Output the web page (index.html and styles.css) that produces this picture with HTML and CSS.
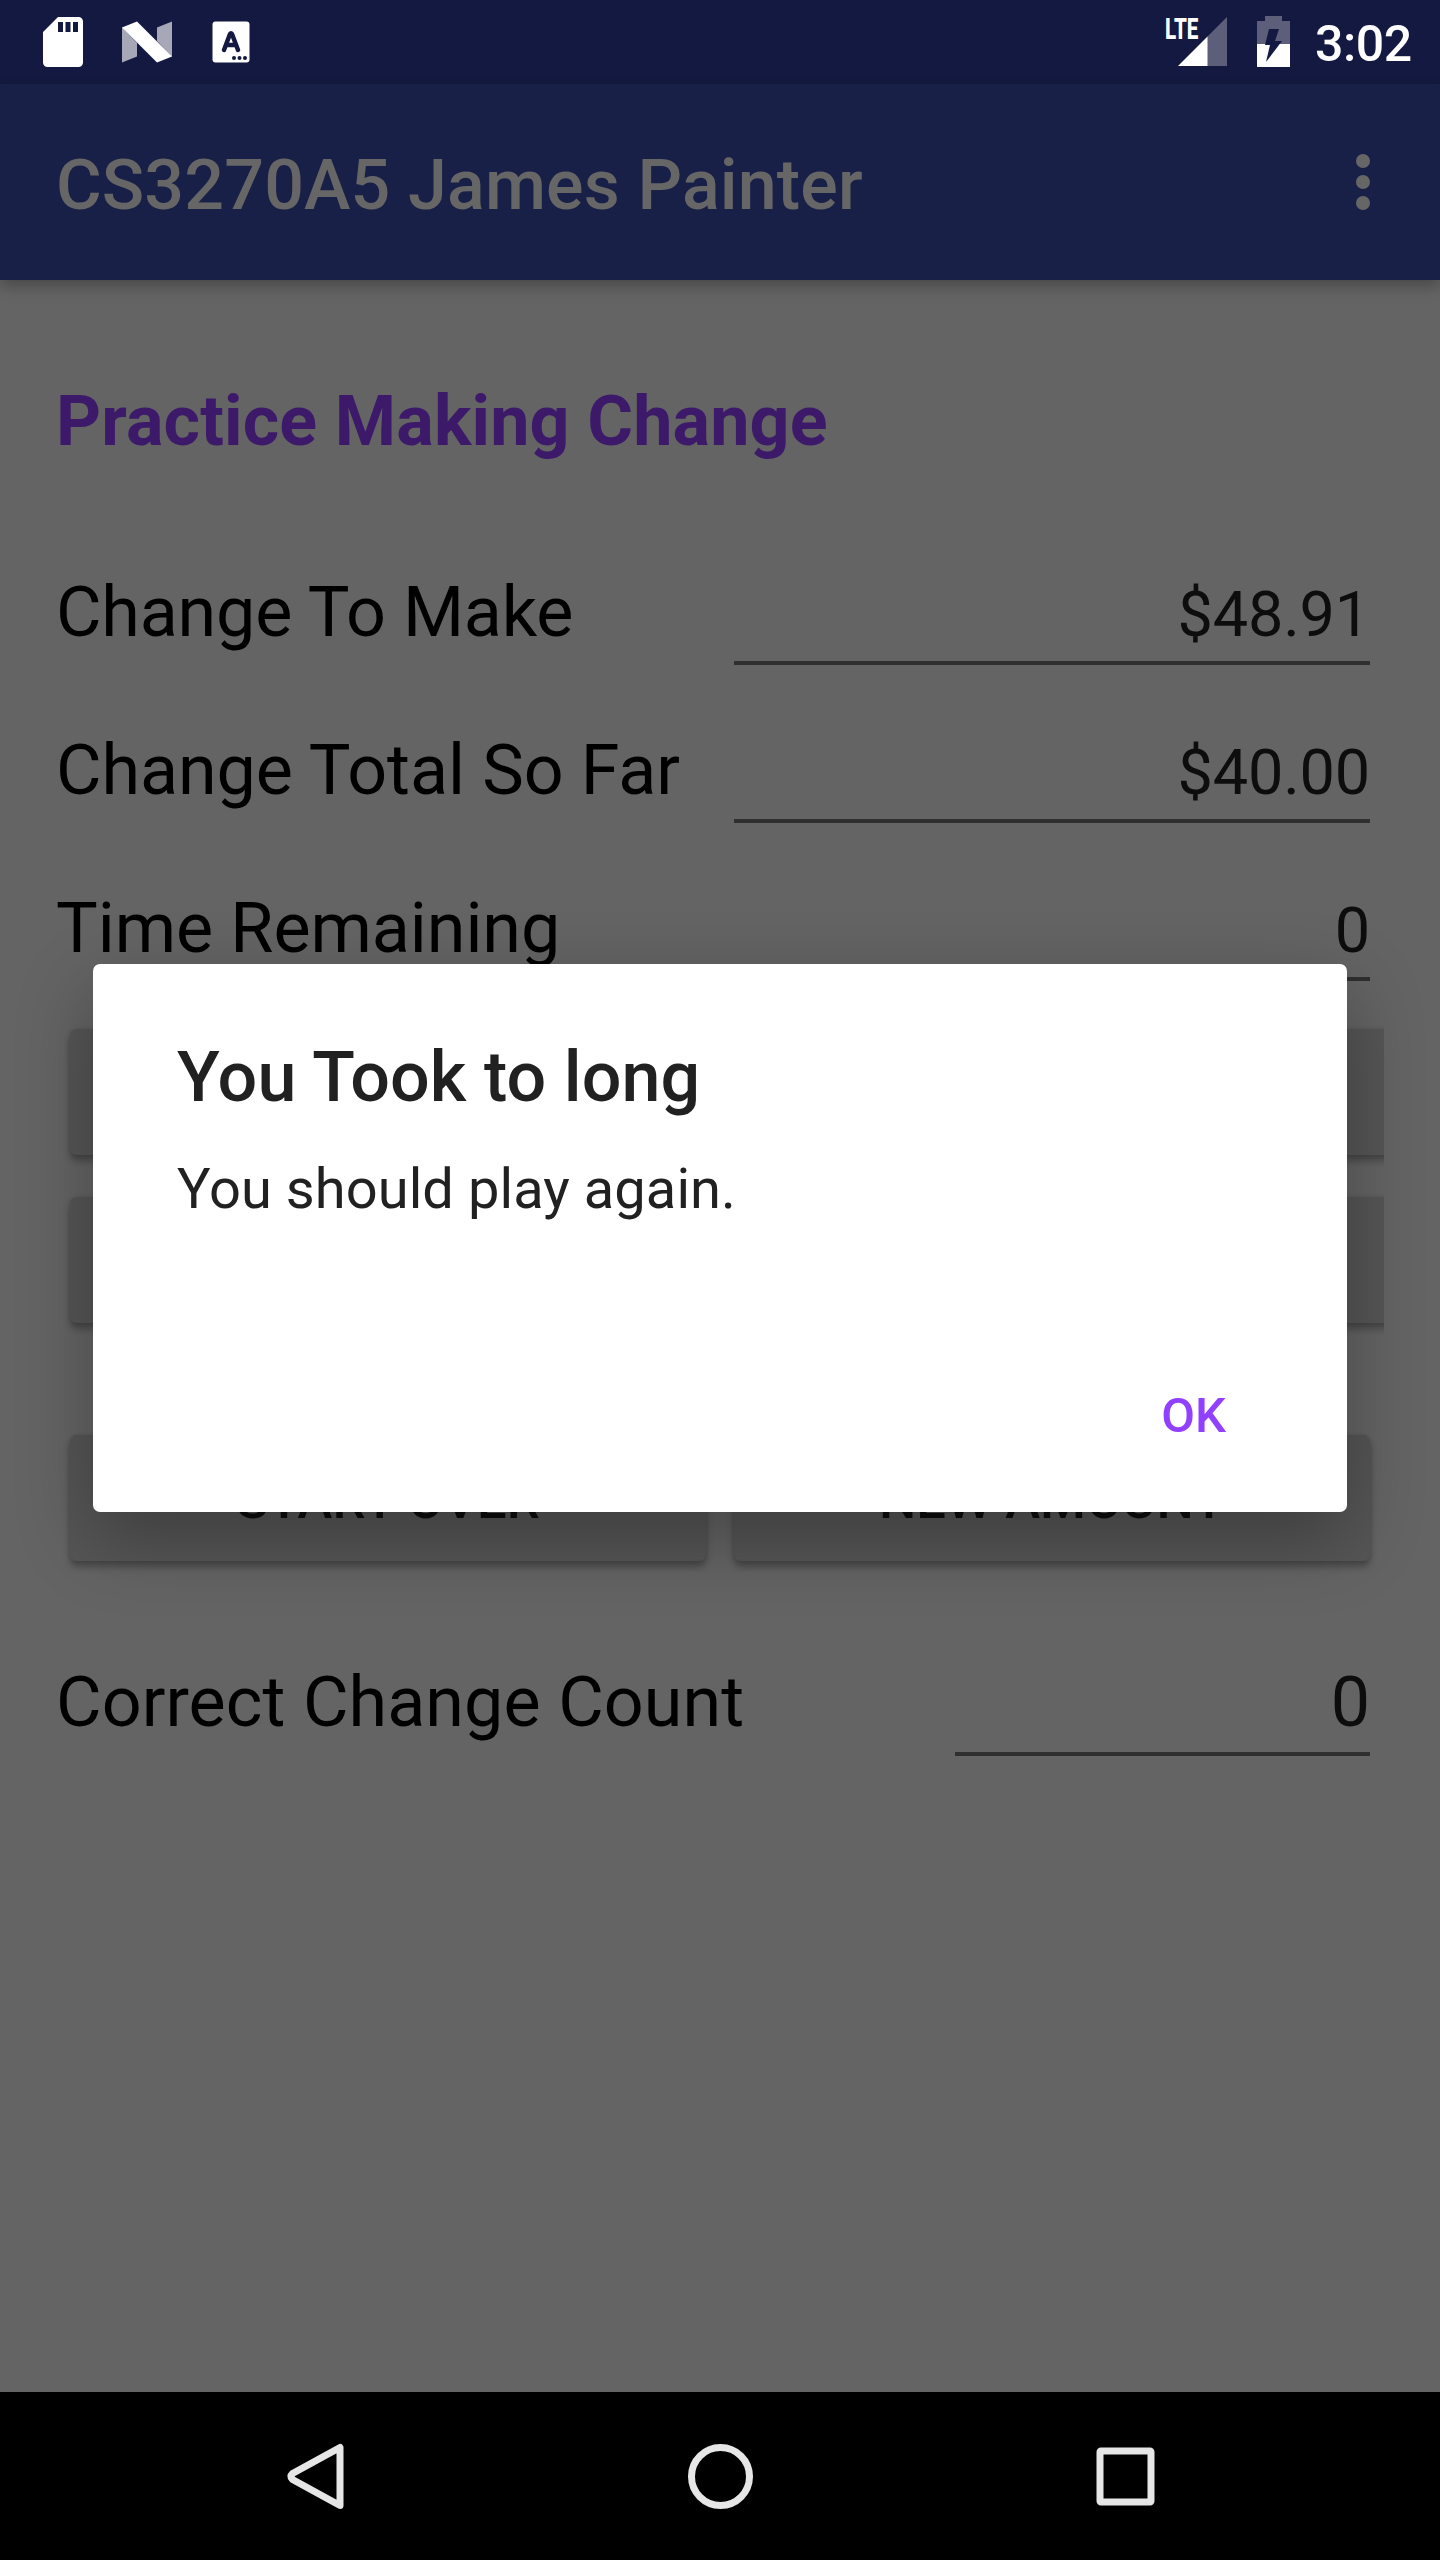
FILE: index.html
```html
<!DOCTYPE html>
<html lang="en">
<head>
<meta charset="utf-8">
<title>CS3270A5 James Painter</title>
<link rel="stylesheet" href="styles.css">
</head>
<body>
<div class="screen">
  <header class="status-bar">
    <svg class="status-icons" width="260" height="84" viewBox="0 0 260 84">
      <path fill="#fff" fill-rule="evenodd" d="M58 17H78.500A4.500 4.500 0 0 1 83 21.500V62.500A4.500 4.500 0 0 1 78.500 67H47.500A4.500 4.500 0 0 1 43 62.500V32ZM58 22V32H63V22ZM65.500 22V32H70.500V22ZM73 22V32H78V22Z"/>
      <path fill="#a6a7b7" d="M122 27L137 43V56.500L122 62.500ZM157 27.500L172 21.500V57L157 41Z"/>
      <path fill="#fff" d="M122 27.500L137 21.500L172 56.500L157 62.500Z"/>
      <rect x="212.500" y="21.500" width="37" height="41" rx="3" fill="#fff"/>
      <path d="M224 50L230 34Q231 32.500 232 34L238 50M226.500 45H235.500" fill="none" stroke="#131940" stroke-width="4.500" stroke-linecap="round" stroke-linejoin="round"/>
      <g fill="#131940"><circle cx="234" cy="58" r="2"/><circle cx="239.500" cy="58" r="2"/><circle cx="245" cy="58" r="2"/></g>
    </svg>
    <div class="status-right">
      <span class="lte">LTE</span>
      <svg width="130" height="84" viewBox="1170 0 130 84">
        <path fill="#5d5f7a" d="M1227 17V66H1207V37Z"/>
        <path fill="#fff" d="M1207.500 36.500V66H1178Z"/>
        <path fill="#5d5f7a" d="M1265 16H1282V21H1290V44H1257V21H1265Z"/>
        <path fill="#fff" d="M1257 44H1290V67H1257Z"/>
        <path fill="#131940" d="M1269 29H1279L1275 41H1282L1266 62L1270 45H1265Z"/>
      </svg>
      <span class="clock">3:02</span>
    </div>
  </header>
  <div class="app-bar">
    <h1 class="app-title">CS3270A5 James Painter</h1>
    <svg width="14" height="56" viewBox="0 0 14 56" fill="#666"><circle cx="7" cy="7" r="7"/><circle cx="7" cy="28" r="7"/><circle cx="7" cy="49" r="7"/></svg>
  </div>
  <main class="content">
    <h2 class="heading">Practice Making Change</h2>
    <div class="row"><span class="label tight">Change To Make</span><span class="field">$48.91</span></div>
    <div class="row"><span class="label">Change Total So Far</span><span class="field">$40.00</span></div>
    <div class="row"><span class="label">Time Remaining</span><span class="field">0</span></div>
    <div class="money-rows">
      <div class="button wide"></div>
      <div class="button wide"></div>
    </div>
    <div class="actions">
      <div class="button">START OVER</div>
      <div class="button">NEW AMOUNT</div>
    </div>
    <div class="row count"><span class="label">Correct Change Count</span><span class="field">0</span></div>
  </main>
  <nav class="nav-bar">
    <svg width="1440" height="168" viewBox="0 2392 1440 168" fill="none" stroke="#e6e6e6" stroke-width="7" stroke-linejoin="round">
      <path d="M340 2447.500V2505.500L292.500 2479.500Q289.500 2476.500 292.500 2473.500Z"/>
      <circle cx="720.500" cy="2476.500" r="29"/>
      <rect x="1100" y="2451" width="51" height="51" rx="1"/>
    </svg>
  </nav>
  <section class="dialog">
    <h3 class="dialog-title">You Took to long</h3>
    <p class="dialog-message">You should play again.</p>
    <span class="dialog-ok">OK</span>
  </section>
</div>
</body>
</html>
```
FILE: styles.css
```css
* { box-sizing: border-box; }
body { margin: 0; font-family: Roboto, "Liberation Sans", sans-serif; }
h1, h2, h3, p { margin: 0; }
svg { display: block; }

.screen {
  position: relative;
  display: flex;
  flex-direction: column;
  width: 1440px;
  height: 2560px;
  overflow: hidden;
  background: #646464;
}

.status-bar {
  display: flex;
  justify-content: space-between;
  height: 84px;
  background: #131940;
}
.status-right { display: flex; color: #fff; }
.lte {
  width: 5px;
  padding-top: 13px;
  font-size: 29px;
  line-height: 32px;
  font-weight: 800;
  white-space: nowrap;
  transform: scaleX(.71);
  transform-origin: left;
}
.clock {
  width: 140px;
  padding: 15px 0 0 15px;
  font-size: 50px;
  line-height: 58px;
  font-weight: 500;
  letter-spacing: -.4px;
}

.app-bar {
  z-index: 1;
  display: flex;
  align-items: center;
  justify-content: space-between;
  height: 196px;
  padding: 0 70px 0 56px;
  background: #192048;
  box-shadow: 0 6px 14px rgba(0, 0, 0, .28);
}
.app-title {
  padding-top: 6px;
  font-size: 70px;
  line-height: 82px;
  font-weight: 500;
  letter-spacing: .14px;
  color: #666;
}

.content { flex: 1; padding: 99px 56px 0; }
.heading {
  height: 129px;
  font-size: 70px;
  line-height: 84px;
  font-weight: 700;
  letter-spacing: .16px;
  color: #3c1a69;
}
.row {
  display: flex;
  align-items: baseline;
  justify-content: space-between;
  height: 158px;
  padding-top: 62px;
}
.label {
  font-size: 70px;
  line-height: 84px;
  letter-spacing: -.06px;
  color: #000;
  white-space: nowrap;
}
.tight { letter-spacing: -.2px; }
.field {
  width: 636px;
  height: 87px;
  margin-right: 14px;
  border-bottom: 4px solid #2f2f2f;
  font-size: 63px;
  line-height: 74px;
  letter-spacing: -.2px;
  text-align: right;
  color: #0d0d0d;
}

.money-rows {
  display: flex;
  flex-direction: column;
  gap: 42px;
  height: 453px;
  padding: 47px 0 0 14px;
  overflow: hidden;
}
.button {
  flex: none;
  width: 636px;
  height: 126px;
  border-radius: 7px;
  background: #565656;
  box-shadow: 0 6px 7px rgba(0, 0, 0, .28), 0 0 4px rgba(0, 0, 0, .12);
  font-size: 52.5px;
  line-height: 130px;
  font-weight: 500;
  text-align: center;
  color: #0d0d0d;
}
.wide { width: 1400px; }
.actions { display: flex; gap: 28px; height: 126px; padding-left: 14px; }
.count { height: 200px; padding-top: 99px; }
.count .label { letter-spacing: .08px; }
.count .field { width: 415px; height: 96px; font-size: 70px; line-height: 84px; }

.nav-bar { height: 168px; background: #000; }

.dialog {
  position: absolute;
  z-index: 2;
  left: 93px;
  top: 964px;
  display: flex;
  flex-direction: column;
  width: 1254px;
  height: 548px;
  padding: 72px 84px 0;
  border-radius: 7px;
  background: #fff;
  box-shadow: 0 26px 76px rgba(0, 0, 0, .3);
  color: #212121;
}
.dialog-title { font-size: 70px; line-height: 82px; font-weight: 500; letter-spacing: .08px; }
.dialog-message { padding-top: 38px; font-size: 56px; line-height: 66px; letter-spacing: .07px; }
.dialog-ok {
  align-self: flex-end;
  padding: 165px 37px 0 0;
  font-size: 49px;
  line-height: 58px;
  font-weight: 500;
  color: #9240ff;
}
```
